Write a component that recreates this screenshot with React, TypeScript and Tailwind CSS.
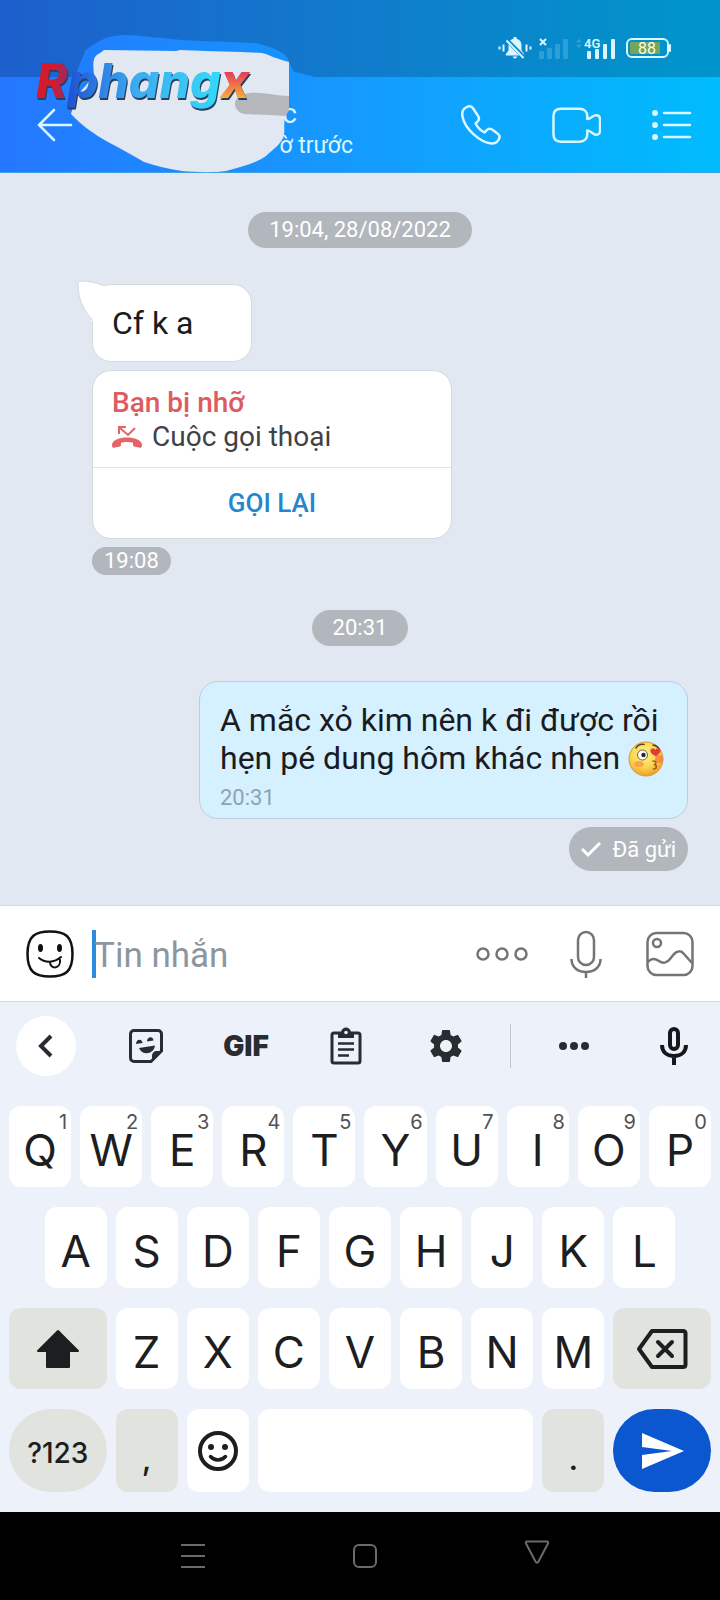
import type { ReactNode } from "react"
import { MdSend, MdSettings } from "react-icons/md"

const TOP_ROW = ["Q", "W", "E", "R", "T", "Y", "U", "I", "O", "P"]
const MIDDLE_ROW = ["A", "S", "D", "F", "G", "H", "J", "K", "L"]
const BOTTOM_ROW = ["Z", "X", "C", "V", "B", "N", "M"]

function StatusBar() {
  return (
    <div className="flex h-[77px] items-start justify-end bg-black/20 pt-9 pr-12">
      <div className="flex items-center text-[#d9f6ff]">
        <svg width="34" height="24" viewBox="0 0 34 24" fill="currentColor">
          <path d="M17 1c1.200 0 1.800.7 1.800 1.700 3 .8 4.700 3.200 4.700 6.500v5.300l2.700 3.500v1.500H7.800v-1.500l2.700-3.500V9.200c0-3.300 1.700-5.700 4.700-6.500C15.200 1.700 15.800 1 17 1zM14.800 20.500h4.400c-.3 1.300-1 2-2.200 2s-1.900-.7-2.200-2z" />
          <path d="M8 3l18 18.500" stroke="#0a86cb" strokeWidth="4" />
          <path d="M8.500 4.500L25.500 22" stroke="currentColor" strokeWidth="2" />
          <path d="M1.500 10.500v3M5.500 8.500v7M28.500 8.500v7M32.500 10.500v3" stroke="currentColor" strokeWidth="2" />
        </svg>
        <svg className="ml-1.5" width="30" height="24" viewBox="0 0 30 24">
          <g fill="#2b9fd6">
            <rect x="1" y="15" width="5" height="8" rx="1" />
            <rect x="9" y="12" width="5" height="11" rx="1" />
            <rect x="17" y="8" width="5" height="15" rx="1" />
            <rect x="25" y="3" width="5" height="20" rx="1" />
          </g>
          <path d="M2 3l6 6M8 3l-6 6" stroke="currentColor" strokeWidth="2" />
        </svg>
        <svg className="ml-2" width="40" height="24" viewBox="0 0 40 24">
          <path d="M0 6.500l3-4 3 4zM0 8.500l3 4 3-4z" fill="#2b9fd6" />
          <text x="8" y="12" fontSize="13" fontWeight="600" fill="currentColor" className="font-['Roboto',sans-serif]">4G</text>
          <g fill="currentColor">
            <rect x="11" y="15" width="4" height="8" rx="1" />
            <rect x="19" y="13" width="4" height="10" rx="1" />
            <rect x="27" y="8" width="4" height="15" rx="1" />
            <rect x="35" y="3" width="4" height="20" rx="1" />
          </g>
        </svg>
        <svg className="ml-2.5" width="46" height="22" viewBox="0 0 46 22">
          <rect x="1" y="2" width="41" height="18" rx="5" fill="none" stroke="currentColor" strokeWidth="2" />
          <rect x="4" y="5" width="30" height="12" rx="1" fill="#74a558" />
          <path d="M44 8v6" stroke="currentColor" strokeWidth="2" strokeLinecap="round" />
          <text x="21" y="17" textAnchor="middle" fontSize="16" fill="#fffce0" className="font-['Roboto',sans-serif]">88</text>
        </svg>
      </div>
    </div>
  )
}

function Header() {
  return (
    <header className="relative border-b border-[#3e9fe0] bg-linear-to-r from-[#2577ff] to-[#00bcfd]">
      <StatusBar />
      <div className="flex h-[95px] items-center pr-7 pl-9 text-[#d9f8ff]">
        <button aria-label="Back">
          <svg width="38" height="34" viewBox="0 0 38 34" fill="none" stroke="currentColor" strokeWidth="2.500" strokeLinecap="round">
            <path d="M35 17H3M18 2L3 17l15 15" />
          </svg>
        </button>
        <div className="w-[279px] pt-1.5 text-right">
          <p className="pr-14 text-[28px] leading-9">c</p>
          <p className="text-[23px] leading-7">ờ trước</p>
        </div>
        <div className="ml-auto flex items-center gap-[51px]">
          <button aria-label="Voice call">
            <svg width="40" height="40" viewBox="0 0 40 40" fill="none" stroke="currentColor" strokeWidth="2.500" strokeLinejoin="round">
              <path d="M5 2.500C2 4 .8 7.500 1.500 11.500 3.500 23.500 19 37.500 30.500 38.500c3.500.2 6-1.500 7.500-4.500 1-2 .5-4-1.200-5.200l-5-3.800c-2-1.600-4.300-1.600-6 .2l-2.200 2.200c-3.400-1.400-7-5-9-8.900l2-2c1.500-1.600 1.700-3.800.4-5.600L12 3.200C10.300 1 7.500 1 5 2.500z" />
            </svg>
          </button>
          <button aria-label="Video call">
            <svg width="49" height="36" viewBox="0 0 50 36" fill="none" stroke="currentColor" strokeWidth="2.500" strokeLinejoin="round">
              <path d="M9 1.500h19c5 0 8 3 8 7.500v3c5-1 5.500-4 9-4 3 0 4 2 4 4.500v11c0 3-1 4.500-4 4.500-3.500 0-4-3.500-9-4.500v4c0 4.500-3 7.500-8 7.500H9c-5 0-7.500-3-7.500-7.500V9c0-4.500 2.500-7.500 7.500-7.500z" />
            </svg>
          </button>
          <button aria-label="Menu">
            <svg width="40" height="32" viewBox="0 0 40 32" fill="currentColor" stroke="currentColor" strokeWidth="2.500" strokeLinecap="round">
              <circle cx="3" cy="4" r="1.700" />
              <circle cx="3" cy="16" r="1.700" />
              <circle cx="3" cy="28" r="1.700" />
              <path d="M12 4h26M12 16h26M12 28h26" />
            </svg>
          </button>
        </div>
      </div>
      <Watermark />
    </header>
  )
}

// painted-over contact name with the site logo on top
function Watermark() {
  return (
    <svg className="pointer-events-none absolute top-0 left-0" width="330" height="174" viewBox="0 0 330 174">
      <defs>
        <linearGradient id="brush" gradientUnits="userSpaceOnUse" x1="0" y1="0" x2="720" y2="0">
          <stop offset="0" stopColor="#2577ff" />
          <stop offset="1" stopColor="#00bcfd" />
        </linearGradient>
        <linearGradient id="logoRed" gradientUnits="userSpaceOnUse" x1="36" y1="0" x2="70" y2="0">
          <stop offset="0.500" stopColor="#d51a2e" />
          <stop offset="1" stopColor="#8b2f6c" />
        </linearGradient>
        <linearGradient id="logoBlue" gradientUnits="userSpaceOnUse" x1="66" y1="0" x2="222" y2="0">
          <stop offset="0" stopColor="#1d4fd0" />
          <stop offset="0.250" stopColor="#3185e6" />
          <stop offset="0.450" stopColor="#3cabf0" />
          <stop offset="1" stopColor="#35dafa" />
        </linearGradient>
        <linearGradient id="logoOrange" gradientUnits="userSpaceOnUse" x1="0" y1="72" x2="0" y2="98">
          <stop offset="0" stopColor="#e83a5c" />
          <stop offset="1" stopColor="#f7ae34" />
        </linearGradient>
      </defs>
      <path d="M76 78c1-10 7-20 9-27 5-5 12-9 21-13 18-6 36-1 56 0 30 4 58 3 93 5 14 3 24 7 30 12 5 5 5 12 9 17 6 1 14 3 21 5v3H76z" fill="url(#brush)" />
      <path d="M104 50l72 1 4-1 26 1 36 1 20 1c8 2 14 6 27 9v38c-1 5-4 8-3 14-3 8-1 15-2 21-2 9-12 15-18 21-10 7-24 11-40 15-14 2-32 1-44 0-14-2-26-5-38-9-12-7-24-14-36-20-14-8-26-16-37-28l5-17c8-10 13-14 18-23-1-7-1-14 1-17 2-3 6-4 9-7z" fill="#e2e8f1" />
      <path d="M250 93c14-1 26 3 39 3v14c-1 3-3 4-4 6-12-1-30-1-41-2-12-3-14-19 6-21z" fill="#b4b8bc" />
      <text x="36" y="98" fontSize="48" fontWeight="800" fontStyle="italic" className="font-['Inter',sans-serif] drop-shadow-[1px_2px_0_#28405f]">
        <tspan fill="url(#logoRed)">R</tspan>
        <tspan fill="url(#logoBlue)">phang</tspan>
        <tspan fill="url(#logoOrange)">x</tspan>
      </text>
    </svg>
  )
}

function TimePill({ children }: { children: ReactNode }) {
  return <p className="self-center rounded-full bg-[#b1b7bc] px-[21px] text-[22px] leading-9 text-white">{children}</p>
}

function KissEmoji() {
  return (
    <svg className="inline-block align-[-8px]" role="img" aria-label="kiss" width="36" height="36" viewBox="0 0 36 36">
      <defs>
        <radialGradient id="face" cx="0.450" cy="0.350" r="0.650">
          <stop offset="0" stopColor="#fff08a" />
          <stop offset="0.600" stopColor="#fcd54e" />
          <stop offset="1" stopColor="#eda02c" />
        </radialGradient>
      </defs>
      <circle cx="18" cy="18" r="17" fill="url(#face)" stroke="#d79a35" />
      <ellipse cx="11" cy="23" rx="5" ry="3" fill="#f58d45" opacity="0.700" />
      <ellipse cx="31" cy="18" rx="4" ry="4" fill="#f36b3c" opacity="0.600" />
      <circle cx="14.500" cy="14" r="5" fill="#fff" stroke="#76613c" />
      <circle cx="15.500" cy="14" r="2.200" fill="#2d2720" />
      <path d="M8 7c2-3 5-4 8-3.500M25 4c3 .5 5 2 6 4" fill="none" stroke="#5a4018" strokeWidth="1.500" strokeLinecap="round" />
      <path d="M28 15.500c-3-2-6-3.500-5.500-6C23 7 26 7 27.500 9c1-2.500 4.500-2.500 5 0 .4 2.500-2.500 4.500-4.500 6.500z" fill="#e5383c" />
      <path d="M25 20c4 0 3.500 3 1 3.500 3.500.5 3 4.500-.5 4.500" fill="none" stroke="#a55a1e" strokeWidth="1.500" strokeLinecap="round" />
    </svg>
  )
}

function Conversation() {
  return (
    <main className="flex flex-col bg-[#e2e8f1] pt-[39px] pr-8 pb-[34px] pl-[92px] text-[32px] text-[#191b1e]">
      <div className="-ml-[60px] flex flex-col">
        <TimePill>19:04, 28/08/2022</TimePill>
      </div>

      <div className="relative mt-9 w-40 rounded-[19px] border border-[#d3d9e0] bg-white px-[19px] py-[18px] leading-10">
        <svg className="absolute -top-[5px] -left-4" width="34" height="46" viewBox="0 0 34 46">
          <path d="M15 40C6 30 1 18 1 3c0-1.500.5-2 2-2 9 0 16 1.500 24 5h6v35H15z" fill="#fff" />
          <path d="M15.500 40C6 30 1 18 1 3c0-1.500.5-2 2-2 9 0 16 1.500 23 4.500" fill="none" stroke="#d3d9e0" />
        </svg>
        <p className="relative">Cf k a</p>
      </div>

      <div className="mt-2 w-[360px] rounded-[19px] border border-[#d3d9e0] bg-white">
        <div className="px-[19px] pt-[15px] pb-[13px] text-[28px] leading-[34px]">
          <p className="font-medium text-[#dc5c5f]">Bạn bị nhỡ</p>
          <p className="flex items-center gap-2.5 text-[#404247]">
            <svg width="30" height="24" viewBox="0 0 30 24" fill="none">
              <path d="M0 20c0-10 30-10 30 0 0 3-1 3-3 2.500l-4-.8c-1.500-.4-2-1-2-2.500v-1.500c-3-1-9-1-12 0v1.500c0 1.500-.5 2.100-2 2.500l-4 .8c-2 .5-3 .5-3-2.500z" fill="#e46467" />
              <path d="M7 9V2h7M8 3l8 7 7-7" stroke="#e46467" strokeWidth="2" />
            </svg>
            Cuộc gọi thoại
          </p>
        </div>
        <button className="block h-[71px] w-full border-t border-[#e1e5e8] text-[26px] font-medium text-[#2487cd]">GỌI LẠI</button>
      </div>
      <p className="mt-2 self-start rounded-full bg-[#b1b7bc] px-3 text-[22px] leading-7 text-white">19:08</p>

      <div className="mt-[35px] -ml-[60px] flex flex-col">
        <TimePill>20:31</TimePill>
      </div>

      <div className="mt-[35px] -ml-6 w-[489px] self-end rounded-[19px] border border-[#b9cfdd] bg-[#d5f0ff] px-5 pt-[19px] pb-1.5 leading-[38px]">
        <p>A mắc xỏ kim nên k đi được rồi hẹn pé dung hôm khác nhen <KissEmoji /></p>
        <p className="mt-[7px] text-[22px] leading-7 text-[#8fa3b0]">20:31</p>
      </div>
      <p className="mt-2 flex h-11 items-center gap-3 self-end rounded-full bg-[#b1b7bc] px-3 text-[22px] text-white">
        <svg width="20" height="18" viewBox="0 0 20 18" fill="none" stroke="currentColor" strokeWidth="3">
          <path d="M1 9l6 6L19 3" />
        </svg>
        Đã gửi
      </p>
    </main>
  )
}

function MessageBar() {
  return (
    <form className="flex h-[97px] items-center border-y border-[#d5dade] bg-white px-[26px] text-[#747474]">
      <button type="button" aria-label="Stickers" className="text-[#111]">
        <svg width="48" height="48" viewBox="0 0 48 48" fill="none" stroke="currentColor" strokeWidth="2.500">
          <path d="M24 1.500C39 1.500 46.500 6 46.500 24S39 46.500 24 46.500 1.500 42 1.500 24 9 1.500 24 1.500z" />
          <ellipse cx="14.500" cy="18" rx="2.500" ry="4" fill="currentColor" stroke="none" />
          <ellipse cx="33.500" cy="18" rx="2.500" ry="4" fill="currentColor" stroke="none" />
          <path d="M13 28c6 5 15 5 22-1M24 32c0 8 11 7 10-2l-1-1.500" strokeLinecap="round" strokeWidth="2" />
        </svg>
      </button>
      <span className="ml-[18px] h-12 w-1 shrink-0 bg-[#2d8bdd]" />
      <input aria-label="Tin nhắn" placeholder="Tin nhắn" className="-ml-0.5 min-w-0 flex-1 pt-1.5 text-[35px] outline-none placeholder:text-[#8b969f]" />
      <button type="button" aria-label="More">
        <svg width="52" height="16" viewBox="0 0 52 16" fill="none" stroke="currentColor" strokeWidth="2.500">
          <circle cx="7" cy="8" r="5.500" />
          <circle cx="26" cy="8" r="5.500" />
          <circle cx="45" cy="8" r="5.500" />
        </svg>
      </button>
      <button type="button" aria-label="Record" className="ml-[42px]">
        <svg width="32" height="48" viewBox="0 0 32 48" fill="none" stroke="currentColor" strokeWidth="2.500">
          <rect x="8" y="2" width="16" height="33" rx="8" />
          <path d="M1.500 29c0 8 6 13 14.500 13s14.500-5 14.500-13M16 42v6" />
        </svg>
      </button>
      <button type="button" aria-label="Pictures" className="ml-11">
        <svg width="48" height="46" viewBox="0 0 48 46" fill="none" stroke="currentColor" strokeWidth="2.500">
          <rect x="1.500" y="2" width="45" height="42" rx="9" />
          <circle cx="11" cy="12" r="4" />
          <path d="M2 31c4-5 8-3 11-1 4 3 8 2 11-2l4-5c3-3 7-4 10 0l8 9" />
        </svg>
      </button>
    </form>
  )
}

function ToolButton({ label, round, children }: { label: string; round?: boolean; children: ReactNode }) {
  return (
    <button aria-label={label} className={`flex size-[60px] items-center justify-center rounded-full ${round ? "bg-white" : ""}`}>
      {children}
    </button>
  )
}

function Toolbar() {
  return (
    <div className="flex items-center justify-between px-4 text-[#292c30]">
      <div className="flex gap-10">
        <ToolButton label="Collapse" round>
          <svg width="24" height="26" viewBox="0 0 24 26" fill="none" stroke="currentColor" strokeWidth="4">
            <path d="M17 3L7 13l10 10" />
          </svg>
        </ToolButton>
        <ToolButton label="Stickers">
          <svg width="36" height="36" viewBox="0 0 36 36" fill="none" stroke="currentColor" strokeWidth="3">
            <path d="M6 2.500h24c2 0 3.500 1.500 3.500 3.500v17L23 33.500H6c-2 0-3.500-1.500-3.500-3.500V6C2.500 4 4 2.500 6 2.500z" />
            <path d="M34 23h-5c-3 0-5 2-5 5v6z" fill="currentColor" stroke="none" />
            <path d="M11 20l16-2.500c-1 9-13 10.500-16 2.500z" fill="currentColor" stroke="none" />
            <path d="M8 16c0-5 6-6 6.500-1zM19 13.500c0-5 6-6 6.500-1z" fill="currentColor" stroke="none" />
          </svg>
        </ToolButton>
        <ToolButton label="GIF">
          <span className="font-['Inter',sans-serif] text-[28px] font-black">GIF</span>
        </ToolButton>
        <ToolButton label="Clipboard">
          <svg width="32" height="38" viewBox="0 0 32 38" fill="none" stroke="currentColor" strokeWidth="3">
            <rect x="2" y="6" width="28" height="30" rx="2" />
            <path d="M8 5h3c1-6 9-6 10 0h3v6H8z" fill="currentColor" stroke="none" />
            <circle cx="16" cy="5.500" r="1.800" fill="#edf2fa" stroke="none" />
            <path d="M8 16.500h16M8 22.500h16M8 28.500h11" strokeWidth="2.500" />
          </svg>
        </ToolButton>
        <ToolButton label="Settings">
          <MdSettings size={40} />
        </ToolButton>
      </div>
      <span className="h-11 w-px bg-[#c3c7cd]" />
      <div className="flex gap-10">
        <ToolButton label="More tools">
          <svg width="30" height="8" viewBox="0 0 30 8" fill="currentColor">
            <circle cx="4" cy="4" r="4" />
            <circle cx="15" cy="4" r="4" />
            <circle cx="26" cy="4" r="4" />
          </svg>
        </ToolButton>
        <ToolButton label="Voice typing">
          <svg width="28" height="38" viewBox="0 0 28 38" fill="none" stroke="#15171a" strokeWidth="4">
            <rect x="10" y="2" width="8" height="20" rx="4" />
            <path d="M2 18c0 7 5 11 12 11s12-4 12-11M14 29v9" />
          </svg>
        </ToolButton>
      </div>
    </div>
  )
}

function Key({ letter, hint }: { letter: string; hint?: number }) {
  return (
    <button className="relative col-span-2 h-[81px] rounded-xl bg-white pt-1.5 text-[44px] leading-none">
      {letter}
      {hint !== undefined && <span className="absolute top-1 right-1 text-[20px] leading-6 text-[#505256]">{hint}</span>}
    </button>
  )
}

function Keyboard() {
  return (
    <section className="bg-[#edf2fa] pt-3.5 pb-5">
      <Toolbar />
      <div className="mt-[30px] grid grid-cols-20 gap-x-[9px] gap-y-5 px-[9px] font-['Inter',sans-serif] text-[#1d1e1f]">
        {TOP_ROW.map((letter, i) => <Key key={letter} letter={letter} hint={(i + 1) % 10} />)}

        <span />
        {MIDDLE_ROW.map(letter => <Key key={letter} letter={letter} />)}
        <span />

        <button aria-label="Shift" className="col-span-3 flex items-center justify-center rounded-xl bg-[#e1e3df]">
          <svg width="44" height="40" viewBox="0 0 44 40" fill="currentColor" stroke="currentColor" strokeWidth="2" strokeLinejoin="round">
            <path d="M22 2L2 22h9v16h22V22h9z" />
          </svg>
        </button>
        {BOTTOM_ROW.map(letter => <Key key={letter} letter={letter} />)}
        <button aria-label="Backspace" className="col-span-3 flex items-center justify-center rounded-xl bg-[#e1e3df]">
          <svg width="52" height="40" viewBox="0 0 52 40" fill="none" stroke="currentColor" strokeWidth="4" strokeLinejoin="round" strokeLinecap="round">
            <path d="M16 2h31c1.500 0 2.500 1 2.500 2.500v31c0 1.500-1 2.500-2.500 2.500H16L3 20z" />
            <path d="M22 13l14 14M36 13L22 27" />
          </svg>
        </button>

        <button className="col-span-3 h-[83px] rounded-full bg-[#e1e3df] pt-1 text-[28px] font-medium">?123</button>
        <button className="col-span-2 rounded-xl bg-[#e1e3df] pt-4 text-[32px] font-medium">,</button>
        <button aria-label="Emoji" className="col-span-2 flex items-center justify-center rounded-xl bg-white">
          <svg width="40" height="40" viewBox="0 0 40 40" fill="none" stroke="currentColor" strokeWidth="4">
            <circle cx="20" cy="20" r="18" />
            <circle cx="13" cy="16" r="3" fill="currentColor" stroke="none" />
            <circle cx="27" cy="16" r="3" fill="currentColor" stroke="none" />
            <path d="M12.500 25.500c4 4.500 11 4.500 15 0" strokeWidth="3.500" strokeLinecap="round" />
          </svg>
        </button>
        <button aria-label="Space" className="col-span-8 rounded-xl bg-white" />
        <button className="col-span-2 rounded-xl bg-[#e1e3df] pt-4 text-[32px] font-medium">.</button>
        <button aria-label="Send" className="col-span-3 flex items-center justify-center rounded-full bg-[#0b57d0] text-white">
          <MdSend size={48} />
        </button>
      </div>
    </section>
  )
}

function NavBar() {
  return (
    <nav className="grid grid-cols-3 items-center bg-black py-7 pr-[97px] pl-[107px] text-[#6b6b6b]">
      <button aria-label="Recent apps" className="justify-self-center">
        <svg width="26" height="32" viewBox="0 0 26 32" stroke="currentColor" strokeWidth="2">
          <path d="M1 5h24M1 16h24M1 27h24" />
        </svg>
      </button>
      <button aria-label="Home" className="justify-self-center">
        <svg width="26" height="32" viewBox="0 0 26 32" fill="none" stroke="currentColor" strokeWidth="2">
          <rect x="2" y="5" width="22" height="22" rx="5" />
        </svg>
      </button>
      <button aria-label="Back" className="justify-self-center">
        <svg width="26" height="32" viewBox="0 0 26 32" fill="none" stroke="currentColor" strokeWidth="2" strokeLinejoin="round">
          <path d="M3 1.500h20c1 0 1.500 1 1 2L14.500 21.500c-.8 1.500-2.200 1.500-3 0L2 3.500c-.5-1 0-2 1-2z" />
        </svg>
      </button>
    </nav>
  )
}

export default function App() {
  return (
    <div className="bg-black font-['Roboto',sans-serif]">
      <Header />
      <Conversation />
      <MessageBar />
      <Keyboard />
      <NavBar />
    </div>
  )
}
